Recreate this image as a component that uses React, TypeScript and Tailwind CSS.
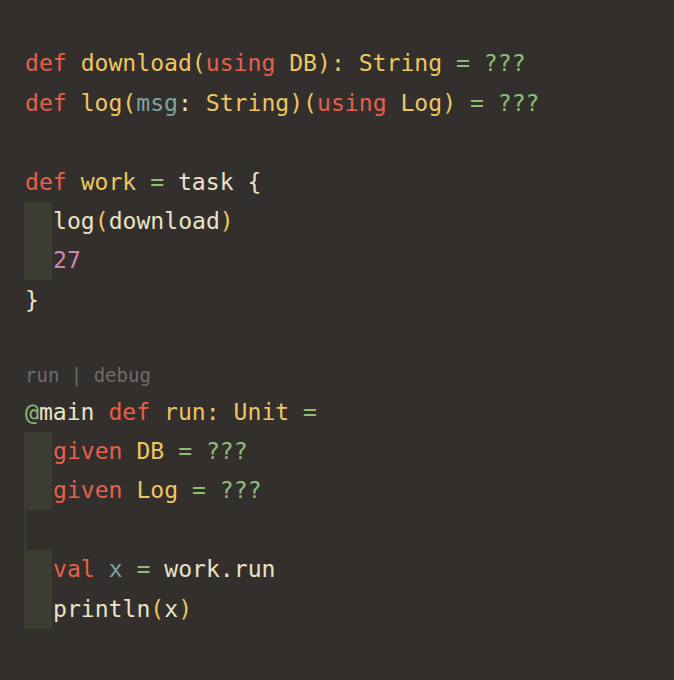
import React from "react";

type Tok = [string, string];

const RED = "text-[#e5604c]";
const YEL = "text-[#efc660]";
const GRN = "text-[#8fbd76]";
const TEAL = "text-[#80a3a0]";
const CRM = "text-[#ebe3c6]";
const PNK = "text-[#d088aa]";

type Line =
  | { kind: "code"; indent: boolean; toks: Tok[] }
  | { kind: "blank"; guide?: boolean }
  | { kind: "lens" };

const lines: Line[] = [
  {
    kind: "code",
    indent: false,
    toks: [
      ["def ", RED],
      ["download(", YEL],
      ["using", RED],
      [" DB): String ", YEL],
      ["= ???", GRN],
    ],
  },
  {
    kind: "code",
    indent: false,
    toks: [
      ["def ", RED],
      ["log(", YEL],
      ["msg", TEAL],
      [": ", CRM],
      ["String)(", YEL],
      ["using", RED],
      [" Log) ", YEL],
      ["= ???", GRN],
    ],
  },
  { kind: "blank" },
  {
    kind: "code",
    indent: false,
    toks: [
      ["def ", RED],
      ["work ", YEL],
      ["= ", GRN],
      ["task {", CRM],
    ],
  },
  {
    kind: "code",
    indent: true,
    toks: [
      ["log", CRM],
      ["(", YEL],
      ["download", CRM],
      [")", YEL],
    ],
  },
  { kind: "code", indent: true, toks: [["27", PNK]] },
  { kind: "code", indent: false, toks: [["}", CRM]] },
  { kind: "blank" },
  { kind: "lens" },
  {
    kind: "code",
    indent: false,
    toks: [
      ["@", GRN],
      ["main ", CRM],
      ["def ", RED],
      ["run: Unit ", YEL],
      ["=", GRN],
    ],
  },
  {
    kind: "code",
    indent: true,
    toks: [
      ["given ", RED],
      ["DB ", YEL],
      ["= ???", GRN],
    ],
  },
  {
    kind: "code",
    indent: true,
    toks: [
      ["given ", RED],
      ["Log ", YEL],
      ["= ???", GRN],
    ],
  },
  { kind: "blank", guide: true },
  {
    kind: "code",
    indent: true,
    toks: [
      ["val ", RED],
      ["x ", TEAL],
      ["= ", GRN],
      ["work.run", CRM],
    ],
  },
  {
    kind: "code",
    indent: true,
    toks: [
      ["println", CRM],
      ["(", YEL],
      ["x", CRM],
      [")", YEL],
    ],
  },
];

const App = () => {
  return (
    <div
      className="w-[674px] h-[680px] bg-[#322f2d] pt-[44px] pl-[24px] overflow-hidden"
      style={{ fontFamily: '"DejaVu Sans Mono", "Liberation Mono", monospace' }}
    >
      {lines.map((line, i) => {
        if (line.kind === "blank") {
          return (
            <div key={i} className="h-[39.4px] flex">
              {line.guide && <div className="w-[2px] h-full bg-[#3c3d31]" />}
            </div>
          );
        }
        if (line.kind === "lens") {
          return (
            <div
              key={i}
              className="h-[33.2px] flex items-center text-[19px] text-[#6f6c68] whitespace-pre pl-px"
            >
              run | debug
            </div>
          );
        }
        return (
          <div key={i} className="h-[39.4px] flex items-center">
            {line.indent && <div className="w-[28px] h-full bg-[#3c3d31]" />}
            <span className="text-[23.1px] whitespace-pre pl-px">
              {line.toks.map(([t, c], j) => (
                <span key={j} className={c}>
                  {t}
                </span>
              ))}
            </span>
          </div>
        );
      })}
    </div>
  );
};

export default App;
